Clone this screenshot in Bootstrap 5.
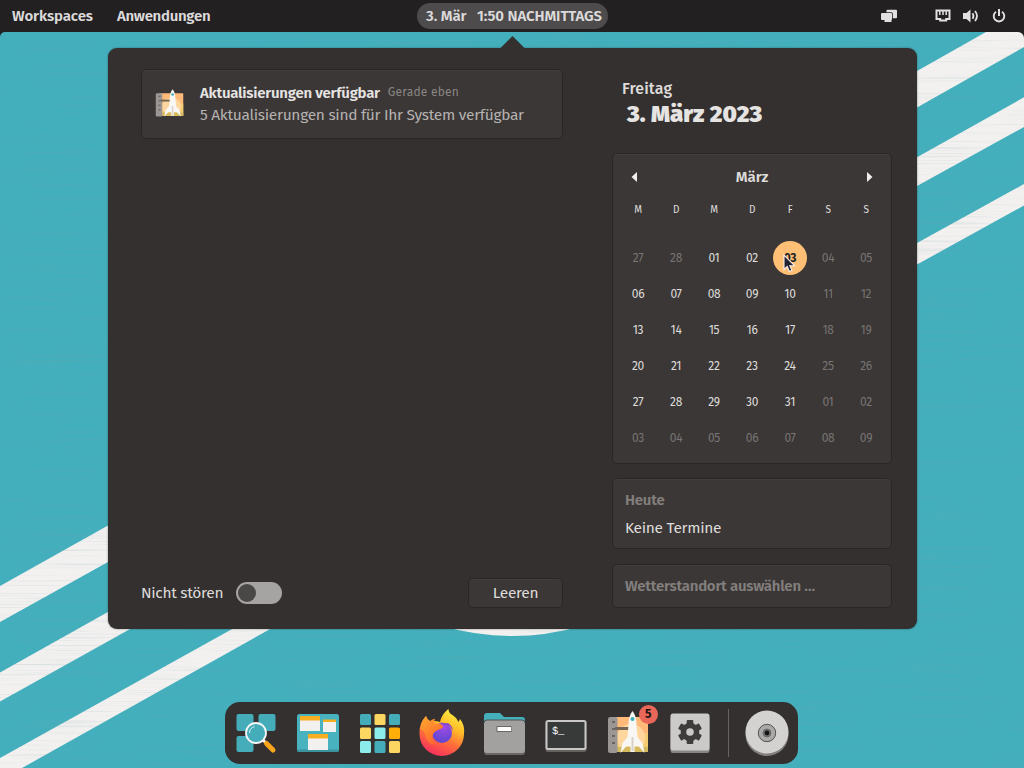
<!DOCTYPE html>
<html lang="de">
<head>
<meta charset="utf-8">
<meta name="viewport" content="width=device-width, initial-scale=1">
<title>Schreibtisch</title>
<link href="https://cdn.jsdelivr.net/npm/bootstrap@5.3.0/dist/css/bootstrap.min.css" rel="stylesheet">
<style>
body{width:1024px;height:768px;background:#43afbd;color:#dedcda;font-family:"Fira Sans",Roboto,"Noto Sans",sans-serif;font-size:15.5px;line-height:20px;letter-spacing:-.3px}
.wallpaper{z-index:-1}
.topbar{height:32px;background:#222021;font-size:15px;font-weight:600;line-height:32px;color:#dcdada}
.topbar .edge{width:417px}
.ws{padding-left:12px;letter-spacing:-.08px}
.apps{padding-left:24px;letter-spacing:-.3px}
.clock{width:191px;height:26px;line-height:26px;background:#4d4b4b;border-radius:13px;padding:0 6px 0 9px;letter-spacing:-.08px}
.tray svg{display:block}
.panel{width:809px;height:581px;margin:16px 0 0 108px;background:#33302f;border-radius:9px;box-shadow:0 0 2px #2228;padding:21px 25px 21px 33px}
.panel-tip{left:392px;top:-12px}
.notices{width:422px}
.side{width:280px}
.tile{background:#3b3736;border:1px solid #292626;border-radius:5px;box-shadow:inset 0 1px #413d3c}
.notice{height:70px;padding:12px 11px}
.note-icon{margin-top:6px}
.note-body{margin-left:14px;padding-top:1px}
.notice .when{font-size:12px;line-height:18px;color:#898684;letter-spacing:.2px;margin-left:8px}
.notice h6{font-size:15px;line-height:21px;font-weight:600;letter-spacing:-.24px;color:#e6e4e2}
.notice p{color:#b5b2b0;line-height:23px}
.dnd{height:30px}
.toggle{width:46px;height:22px;border-radius:11px;background:#a5a4a3;margin-left:13px;padding:2px}
.toggle span{width:18px;height:18px;border-radius:50%;background:#4a4747}
.clear{width:95px;height:30px;color:#dedcda;font-size:15.5px;line-height:28px;letter-spacing:-.3px}
.today{height:84px;padding:10px 0 0 10px}
.today div{font-size:16px;font-weight:500;letter-spacing:.12px}
.today h1{font-size:24px;line-height:30px;font-weight:900;letter-spacing:.07px;margin:0 0 0 5px;color:#e6e4e2}
.cal{height:311px;padding:7px 6px 0}
.cal-head{height:32px;padding:0 12px 0 12px;font-size:15px;font-weight:600;letter-spacing:0}
.grid7{display:grid;grid-template-columns:repeat(7,38px);text-align:center}
.dow{height:47px;font-size:10px;line-height:32px;padding-top:1px}
.dates{grid-auto-rows:36px;line-height:36px;font-size:12px;letter-spacing:-.3px}
.dates .off{color:#777473}
.now span{display:block;width:34px;height:34px;line-height:34px;margin:1px auto;border-radius:50%;background:#ffbf75;color:#272322;font-weight:700}
.pointer{left:12px;top:14px}
.events{height:71px;margin-top:14px;padding:11px 12px 0}
.weather{height:44px;margin-top:15px;padding:11px 12px}
.dim{color:#827f7d;font-size:15px;font-weight:600;letter-spacing:-.24px}
.dock{width:573px;height:62px;margin:73px 0 0 225px;border-radius:15px;background:#33302f;padding:7px 6px 7px 7px}
.dock svg{display:block}
.dock .app{width:48px;margin-right:14px;flex-shrink:0}
.count{left:34.500px;top:-4px;width:19px;height:19px;border-radius:50%;background:#e96758;color:#1c1614;font-size:12px;line-height:19px;font-weight:700}
.rule{width:1px;height:48px;background:#666361;margin:0 15px 0 0;flex-shrink:0}
</style>
<script src="https://cdn.jsdelivr.net/npm/bootstrap@5.3.0/dist/js/bootstrap.bundle.min.js"></script>
</head>
<body class="position-relative overflow-hidden">
<svg class="wallpaper position-absolute top-0 start-0" width="1024" height="768">
  <defs><filter id="grain" x="0" y="0" width="100%" height="100%"><feTurbulence type="fractalNoise" baseFrequency=".008 .7" numOctaves="2" seed="4"/><feColorMatrix values="0 0 0 0 .2  0 0 0 0 .35  0 0 0 0 .38  1.6 0 0 0 -.82"/></filter></defs>
  <rect width="1024" height="768" fill="#43afbd"/>
  <g fill="#f2f1f0">
    <path d="M0 586L108 525.500V562L0 622ZM0 672.500L140 594V623.500L0 701.500ZM0 758L234 628H272L22 768H0Z"/>
    <path d="M917 71L986 32H1024V47L917 107.500ZM917 157.300L1024 97.300V127L917 186ZM917 243L1024 184V205.500L917 264.500Z"/>
    <path d="M442 626Q512 646 582 626Z"/>
  </g>
  <rect width="1024" height="768" filter="url(#grain)" opacity=".3"/>
  <path d="M0 32h5a5 5 0 0 0-5 5zM1024 32h-6a6 6 0 0 1 6 6z" fill="#222021"/>
</svg>

<nav class="topbar d-flex align-items-center">
  <div class="edge d-flex"><span class="ws">Workspaces</span><span class="apps">Anwendungen</span></div>
  <div class="clock d-flex justify-content-between text-nowrap"><span>3. Mär</span><span>1:50 NACHMITTAGS</span></div>
  <div class="tray ms-auto">
    <svg width="146" height="32" fill="#e2e0e0">
      <rect x="8.500" y="9.800" width="10.500" height="8.400" rx="1"/><rect x="2.200" y="12.200" width="12.600" height="8.600" rx="1.500" fill="#222021"/><rect x="3" y="13" width="11" height="7" rx="1"/><rect x="6.500" y="19.500" width="7" height="2.500"/>
      <path d="M58.500 10.500h13v8.500h-3.300v1.500h-6v-1.500h-3.700z" fill="none" stroke="#e2e0e0" stroke-width="2"/><path d="M61.800 10.500v4.500M65 10.500v4.500M68.200 10.500v4.500" stroke="#e2e0e0" stroke-width="1.500"/>
      <path d="M85 13h3.500l4-3.500v13l-4-3.500H85z"/><path d="M94.500 13.200q2 2.800 0 5.600M97 11q4 5 0 10" fill="none" stroke="#e2e0e0" stroke-width="1.800"/>
      <path d="M118 11.800a5.300 5.300 0 1 0 6 0" fill="none" stroke="#e2e0e0" stroke-width="1.900"/><path d="M121 9v7" stroke="#e2e0e0" stroke-width="2"/>
    </svg>
  </div>
</nav>

<main class="panel position-relative d-flex justify-content-between">
  <svg class="panel-tip position-absolute" width="25" height="13"><path d="M0 12.500L12.500 0L25 12.500Z" fill="#33302f"/></svg>
  <section class="notices d-flex flex-column justify-content-between">
    <div class="notice tile d-flex">
      <svg width="33" height="31" class="note-icon flex-shrink-0" viewBox="0 0 48 48" preserveAspectRatio="none"><use href="#installer"/></svg>
      <div class="note-body text-nowrap">
        <div class="d-flex align-items-start"><h6 class="mb-0">Aktualisierungen verfügbar</h6><span class="when">Gerade eben</span></div>
        <p class="mb-0">5 Aktualisierungen sind für Ihr System verfügbar</p>
      </div>
    </div>
    <div class="dnd d-flex align-items-center">
      <span>Nicht stören</span><div class="toggle"><span class="d-block"></span></div>
      <button class="clear tile p-0 ms-auto">Leeren</button>
    </div>
  </section>
  <aside class="side">
    <div class="today"><div>Freitag</div><h1>3. März 2023</h1></div>
    <div class="cal tile">
      <div class="cal-head d-flex justify-content-between align-items-center">
        <svg width="6" height="10" fill="#f0eeee"><path d="M6 0v10L.500 5z"/></svg><span>März</span><svg width="6" height="10" fill="#f0eeee"><path d="M0 0v10L5.500 5z"/></svg>
      </div>
      <div class="grid7 dow"><span>M</span><span>D</span><span>M</span><span>D</span><span>F</span><span>S</span><span>S</span></div>
      <div class="grid7 dates">
        <span class="off">27</span><span class="off">28</span><span>01</span><span>02</span><div class="now position-relative"><span>03</span><svg class="pointer position-absolute" width="13" height="19"><path d="M1 1V15.500L4.200 12.500L6.400 17.500L9 16.300L6.800 11.700H11.500Z" fill="#232230" stroke="#f6eeee" stroke-width="1.100"/></svg></div><span class="off">04</span><span class="off">05</span>
        <span>06</span><span>07</span><span>08</span><span>09</span><span>10</span><span class="off">11</span><span class="off">12</span>
        <span>13</span><span>14</span><span>15</span><span>16</span><span>17</span><span class="off">18</span><span class="off">19</span>
        <span>20</span><span>21</span><span>22</span><span>23</span><span>24</span><span class="off">25</span><span class="off">26</span>
        <span>27</span><span>28</span><span>29</span><span>30</span><span>31</span><span class="off">01</span><span class="off">02</span>
        <span class="off">03</span><span class="off">04</span><span class="off">05</span><span class="off">06</span><span class="off">07</span><span class="off">08</span><span class="off">09</span>
      </div>
    </div>
    <div class="events tile"><div class="dim">Heute</div><div class="mt-2">Keine Termine</div></div>
    <div class="weather tile dim">Wetterstandort auswählen …</div>
  </aside>
</main>

<footer class="dock d-flex align-items-center">
  <div class="app"><svg width="48" height="48">
    <g fill="#45adb9"><rect x="4.500" y="5" width="17" height="17" rx="2"/><rect x="26.500" y="5" width="17" height="17" rx="2"/><rect x="4.500" y="27" width="17" height="16" rx="2"/></g>
    <path d="M31 31l3 3" stroke="#f6f6f6" stroke-width="3"/><path d="M34.500 34.500l6.500 6.500" stroke="#f9a519" stroke-width="5" stroke-linecap="round"/>
    <circle cx="24" cy="24" r="10" fill="#45adb9" stroke="#f6f6f6" stroke-width="1.800"/><path d="M17.500 24a6.500 6.500 0 0 1 5-6.300" fill="none" stroke="#d9eef0" stroke-width="1"/>
  </svg></div>
  <div class="app"><svg width="48" height="48"><rect x="3" y="5" width="42" height="38" rx="2.500" fill="#48b2be"/><path d="M3 40.500a2.500 2.500 0 0 0 2.500 2.500h37a2.500 2.500 0 0 0 2.500-2.500z" fill="#3a939d"/>
    <g fill="#f3f1ef"><path d="M6 8h20v14H6zM29 11h13v12H29zM14 26h20v15H14z"/></g><path d="M6 7h20v4.500H6zM29 10.500h13v2.500H29zM14 25h20v4.500H14z" fill="#f7ae20"/></svg></div>
  <div class="app"><svg width="48" height="48">
    <g fill="#45adb9"><rect x="4" y="5" width="11" height="11" rx="1.500"/><rect x="33" y="5" width="11" height="11" rx="1.500"/><rect x="18.500" y="32" width="11" height="12" rx="1.500"/></g>
    <g fill="#fbd661"><rect x="18.500" y="5" width="11" height="11" rx="1.500"/><rect x="4" y="18.500" width="11" height="11.500" rx="1.500"/><rect x="33" y="32" width="11" height="12" rx="1.500"/></g>
    <g fill="#8cecec"><rect x="18.500" y="18.500" width="11" height="11.500" rx="1.500"/><rect x="4" y="32" width="11" height="12" rx="1.500"/></g><rect x="33" y="18.500" width="11" height="11.500" rx="1.500" fill="#ffad08"/></svg></div>
  <div class="app"><svg width="48" height="48">
    <defs><linearGradient id="fox" x1=".75" y1="0" x2=".3" y2="1"><stop offset="0" stop-color="#fff144"/><stop offset=".35" stop-color="#ffbb27"/><stop offset=".62" stop-color="#ff703a"/><stop offset="1" stop-color="#f72b60"/></linearGradient><linearGradient id="tail" x1="0" y1="0" x2=".7" y2="1"><stop offset="0" stop-color="#ffad2d"/><stop offset="1" stop-color="#ff612f"/></linearGradient><radialGradient id="globe" cx=".6" cy=".2" r=".9"><stop offset="0" stop-color="#a04be8"/><stop offset="1" stop-color="#5546cb"/></radialGradient></defs>
    <path d="M30.500 0C25 4 23 9 22 13Q16 11 12 13Q8 11 8 7Q1 14 1.500 25A22.200 22 0 0 0 46 25Q47 16 42 10L40.500 13Q38 8 34.500 6Q30.500 4 30.500 0Z" fill="url(#fox)"/>
    <circle cx="24" cy="24" r="10" fill="url(#globe)"/>
    <path d="M2 21Q3 13 8 7Q9 10 12 12Q17 9 17 10Q15 14 17 15Q23 14 25 17Q26 19 20 21Q17 22 15 25Q13 31 18 36Q8 35 7 25Q4 19 2 21Z" fill="url(#tail)"/>
    <path d="M22 13Q27 15 30 14Q35 17 35 23Q34 18 29 16Q25 17 22 13Z" fill="#8344cf"/></svg></div>
  <div class="app"><svg width="48" height="48"><path d="M4 7q0-3 3-3h13l4 4h18q3 0 3 3v8H4z" fill="#45afba"/><rect x="4" y="13" width="41" height="33" rx="3" fill="#696664"/><rect x="4" y="11" width="41" height="33" rx="3" fill="#a2a1a0"/><path d="M4 14q0-3 3-3h35q3 0 3 3" fill="none" stroke="#4b5557" stroke-width="1"/><rect x="16.500" y="17" width="15" height="6" fill="#6b6968"/><rect x="17.500" y="18" width="13.500" height="4" fill="#fff"/></svg></div>
  <div class="app"><svg width="48" height="48"><rect x="3.500" y="12" width="41" height="31" rx="2.500" fill="#656260"/><rect x="3.500" y="11" width="41" height="30" rx="2.500" fill="#c9c8c7"/><rect x="5.500" y="13" width="37" height="26" rx=".5" fill="#383a3a"/><text x="10" y="25" fill="#fff" font-family="Liberation Mono,monospace" font-size="10.500">$_</text></svg></div>
  <div class="app position-relative"><svg width="48" height="48"><g id="installer">
    <rect x="9" y="8" width="35" height="35" rx="1" fill="#ffb978"/><path d="M9 24h35v19H9z" fill="#f4cc73"/><circle cx="27" cy="29" r="14" fill="#ffd69d"/><path d="M10 38h34v5H10z" fill="#d3ba5e"/>
    <rect x="4" y="8" width="9.500" height="36" rx="2" fill="#9b9593"/><path d="M8 13h3M8 20h3M8 27h3M8 34h3" stroke="#6a6664" stroke-width="2"/><path d="M11 18h14v3H11z" fill="#746657"/>
    <path d="M28.500 2q4 5 4 14l1 12 5 6 2 10-6-7h-4v6h-4v-6h-4l-6 7 2-10 5-6 1-12q0-9 4-14z" fill="#f9f7f4"/><path d="M28.500 28v14" stroke="#d9d1c9" stroke-width="2"/><circle cx="28.500" cy="10" r="2" fill="#3badba"/>
    </g></svg><span class="count position-absolute text-center">5</span></div>
  <div class="app"><svg width="48" height="48"><rect x="4.500" y="7" width="39" height="37" rx="2.500" fill="#888685"/><rect x="4.500" y="4.500" width="39" height="37" rx="2.500" fill="#cbcac9"/>
    <g transform="translate(24 23)" fill="#3f3d3b"><circle r="9.300"/><g id="cog"><rect x="-3.300" y="-12" width="6.600" height="24" rx="1"/></g><use href="#cog" transform="rotate(60)"/><use href="#cog" transform="rotate(120)"/><circle r="3.800" fill="#cbcac9"/></g></svg></div>
  <div class="rule"></div>
  <svg width="46" height="48" class="flex-shrink-0"><circle cx="23" cy="25.500" r="21.500" fill="#82807e"/><circle cx="23" cy="23" r="21.500" fill="#d3d2d1"/><circle cx="23" cy="24" r="8.700" fill="#aaa9a8" stroke="#555352" stroke-width="1"/><circle cx="23" cy="24" r="3.900" fill="#777" stroke="#555" stroke-width=".7"/><circle cx="23" cy="24" r="2.400" fill="#151414"/></svg>
</footer>
</body>
</html>
